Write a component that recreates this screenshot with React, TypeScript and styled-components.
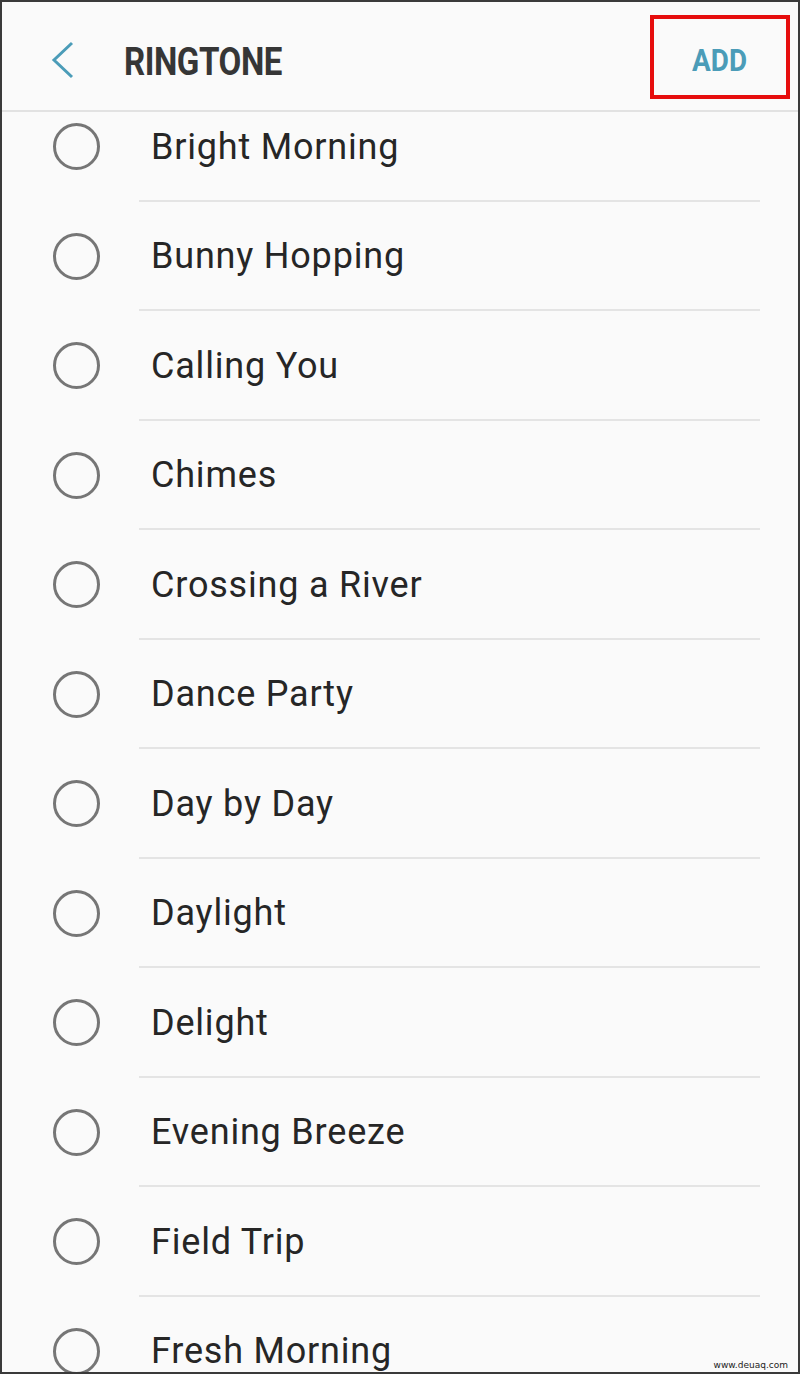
import React from "react";
import styled, { createGlobalStyle } from "styled-components";

const GlobalStyle = createGlobalStyle`
  html, body {
    margin: 0;
    padding: 0;
    background: #fafafa;
  }
  * {
    box-sizing: border-box;
  }
`;

const Frame = styled.div`
  position: relative;
  width: 800px;
  height: 1374px;
  border: 2px solid #3a3a3a;
  background: #fafafa;
  overflow: hidden;
  font-family: Roboto, "Noto Sans", sans-serif;
`;

const Header = styled.header`
  display: flex;
  align-items: center;
  height: 110px;
  padding: 8px 8px 0 46px;
  border-bottom: 2px solid #e2e2e2;
`;

const BackButton = styled.button`
  display: flex;
  align-items: center;
  justify-content: flex-start;
  width: 32px;
  height: 40px;
  padding: 0;
  border: none;
  background: none;
`;

const Title = styled.h1`
  flex: 1;
  margin: 4px 0 0 44px;
  font-size: 38px;
  font-weight: 700;
  letter-spacing: -0.5px;
  color: #363636;
  transform: scaleX(0.87);
  transform-origin: left center;
`;

const AddBox = styled.div`
  display: flex;
  align-items: center;
  justify-content: center;
  width: 140px;
  height: 84px;
  margin-top: -6px;
  padding-top: 6px;
  border: 4px solid #e60d0d;
`;

const AddButton = styled.span`
  font-size: 32px;
  font-weight: 700;
  color: #4b9cb8;
  transform: scaleX(0.87);
`;

const ListViewport = styled.div`
  height: calc(100% - 110px);
  overflow: hidden;
`;

const List = styled.ul`
  list-style: none;
  margin: -20px 0 0;
  padding: 0;
`;

const Row = styled.li`
  display: flex;
  align-items: center;
  height: 109.5px;
  padding-left: 51px;
  position: relative;

  &:not(:last-child)::after {
    content: "";
    position: absolute;
    left: 137px;
    right: 38px;
    bottom: 0;
    height: 2px;
    background: #e4e4e4;
  }
`;

const Radio = styled.span`
  flex: none;
  width: 47px;
  height: 47px;
  border: 3px solid #767676;
  border-radius: 50%;
`;

const Label = styled.span`
  margin-left: 51px;
  font-size: 36px;
  letter-spacing: 0.8px;
  color: #262626;
`;

const Watermark = styled.span`
  position: absolute;
  right: 10px;
  bottom: 2px;
  font-family: "DejaVu Sans", sans-serif;
  font-size: 9px;
  color: #222;
`;

const tones = [
  "Bright Morning",
  "Bunny Hopping",
  "Calling You",
  "Chimes",
  "Crossing a River",
  "Dance Party",
  "Day by Day",
  "Daylight",
  "Delight",
  "Evening Breeze",
  "Field Trip",
  "Fresh Morning",
];

export default function App() {
  return (
    <>
      <GlobalStyle />
      <Frame>
        <Header>
          <BackButton aria-label="Back">
            <svg width="28" height="40" viewBox="0 0 28 40">
              <path d="M24 3 L6 20 L24 37" fill="none" stroke="#4b9cb8" strokeWidth="3" />
            </svg>
          </BackButton>
          <Title>RINGTONE</Title>
          <AddBox>
            <AddButton>ADD</AddButton>
          </AddBox>
        </Header>
        <ListViewport>
          <List>
            {tones.map((t) => (
              <Row key={t}>
                <Radio />
                <Label>{t}</Label>
              </Row>
            ))}
          </List>
        </ListViewport>
        <Watermark>www.deuaq.com</Watermark>
      </Frame>
    </>
  );
}
